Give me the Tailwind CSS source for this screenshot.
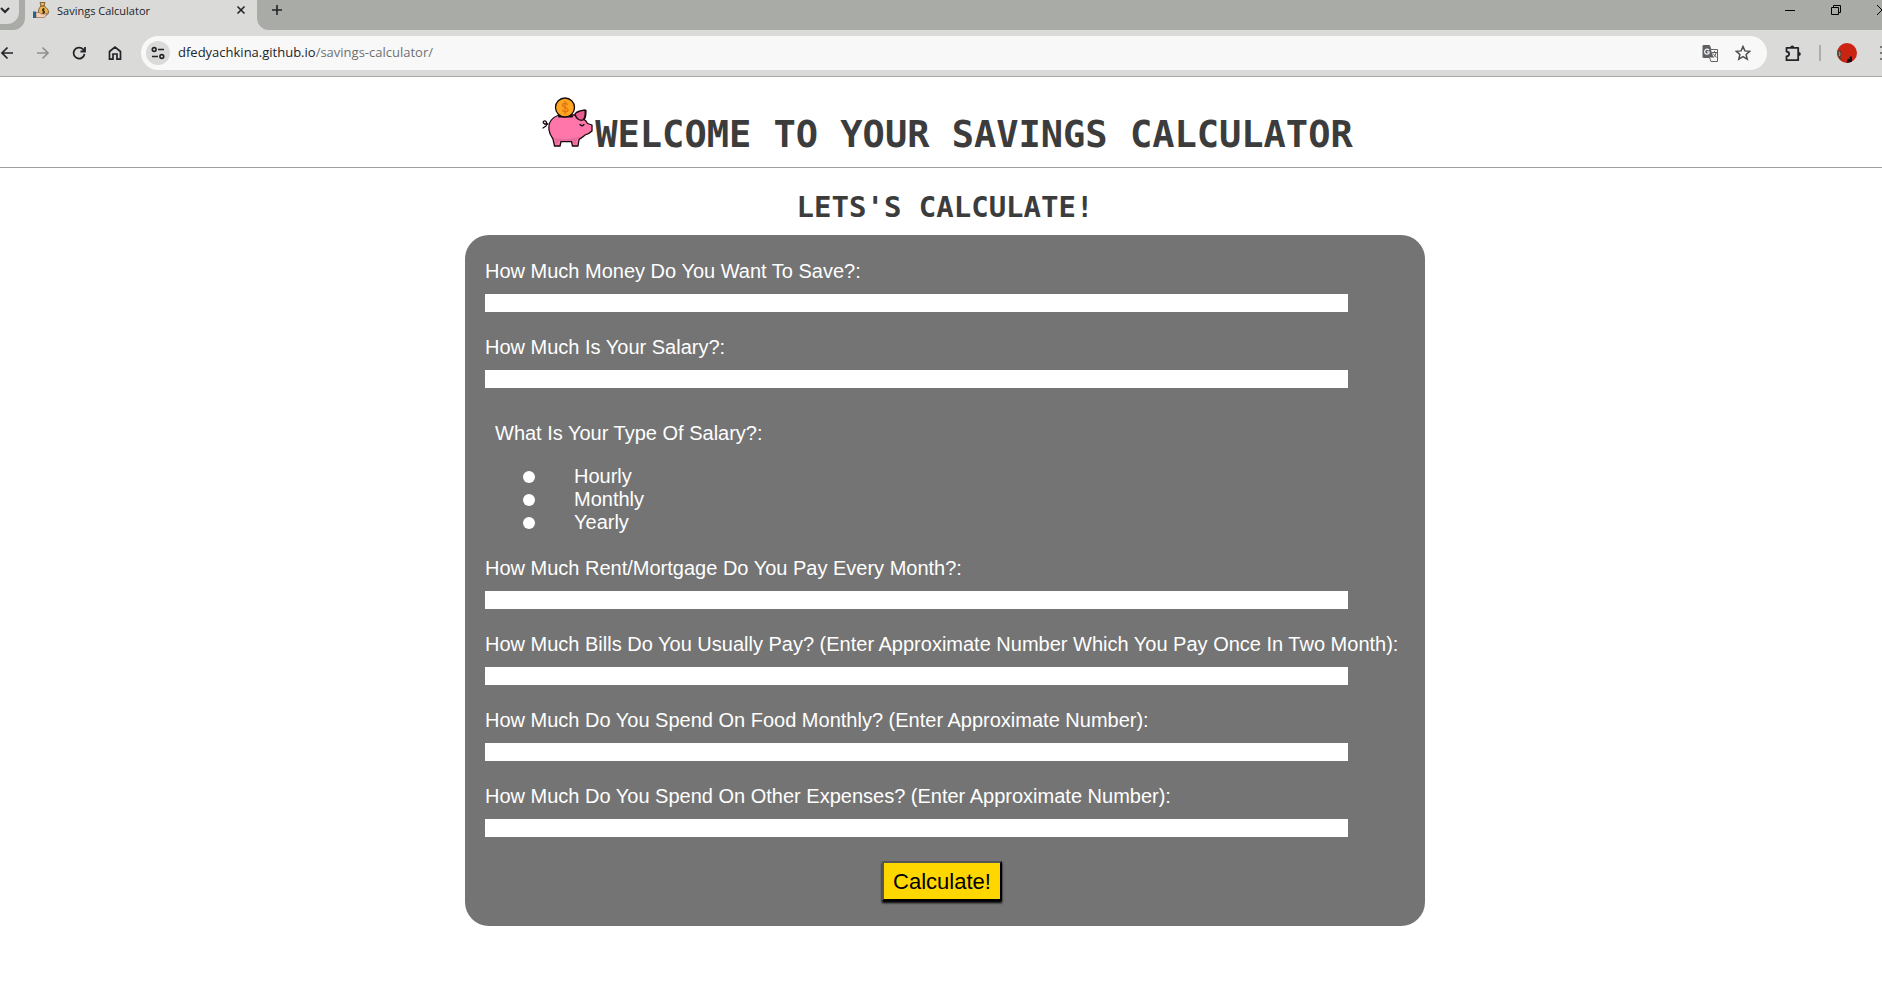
<!DOCTYPE html>
<html lang="en">
<head>
<meta charset="utf-8">
<title>Savings Calculator</title>
<script src="https://cdn.jsdelivr.net/npm/@tailwindcss/browser@4"></script>
</head>
<body class="min-h-screen overflow-x-hidden bg-white font-['Liberation_Sans',sans-serif]">
<header class="border-b border-[#a9aaa8] bg-[#dadad8] font-['Open_Sans',sans-serif] text-[#222428]">
  <!-- Tab strip -->
  <div class="flex h-[30px] bg-[#dadad8]">
    <div class="flex w-[25px] shrink-0 items-start rounded-br-xl bg-[#a9aba6]">
      <button aria-label="Search tabs" class="h-6 w-[19px] rounded-br-xl bg-[#dadad8]">
        <svg class="h-6 w-[10px]" viewBox="0 0 10 24" fill="none" stroke="currentColor" stroke-width="2"><path d="M1 8l4 4 4-4"/></svg>
      </button>
    </div>
    <div class="flex w-[232px] shrink-0 items-start bg-[#dadad8] pl-2">
      <svg class="mt-[2px] size-4" viewBox="0 0 16 16"><path d="M7 .5h5l-1 3.500c3 2 4.500 4 4.500 6 0 2.500-2 3.500-5 3.500s-5-1-5-3.500S6 6 8 4z" fill="#eeb54c" stroke="#6b4a28" stroke-width=".8"/><path d="M7.500 4h4" stroke="#6b4a28"/><path d="M11.800 7H9.500v2h2v2H9M10.500 6v6" fill="none" stroke="#3d2c22" stroke-width=".9"/><path d="M3 10.500h3l2.500 1.500h3l3-1-3 4.500H3z" fill="#f6cdb0" stroke="#7a5a4c" stroke-width=".6"/><path d="M0 9.500h3V16H0z" fill="#276396"/></svg>
      <span class="ml-2 text-[11px] leading-[22px]">Savings Calculator</span>
      <button aria-label="Close tab" class="mt-[5px] mr-[11px] ml-auto"><svg class="size-[10px]" viewBox="0 0 10 10" stroke="currentColor" stroke-width="1.600"><path d="M1.500 1.500l7 7M8.500 1.500l-7 7"/></svg></button>
    </div>
    <div class="flex flex-1 items-start rounded-bl-xl bg-[#a9aba6] pl-[14px]">
      <button aria-label="New tab" class="mt-1"><svg class="size-3" viewBox="0 0 12 12" stroke="currentColor" stroke-width="1.600"><path d="M6 1v10M1 6h10"/></svg></button>
      <div class="ml-auto flex items-center text-black">
        <button aria-label="Minimize" class="mt-1 mr-9"><svg class="h-3 w-[10px]" viewBox="0 0 10 12" stroke="currentColor"><path d="M0 6.500h10"/></svg></button>
        <button aria-label="Restore" class="mt-1 mr-9"><svg class="h-3 w-[10px]" viewBox="0 0 10 12" fill="none" stroke="currentColor"><path d="M.5 3.500h7v7h-7zM2.500 3.500v-2h7v7h-2"/></svg></button>
        <button aria-label="Close window" class="mt-1"><svg class="h-3 w-[5px]" viewBox="0 0 5 12" stroke="currentColor"><path d="M0 1l10 10M0 11L10 1" fill="none"/></svg></button>
      </div>
    </div>
  </div>
  <!-- Toolbar -->
  <div class="flex h-[46px] items-center">
    <button aria-label="Back"><svg class="h-4 w-[14px]" viewBox="0 0 14 16" fill="none" stroke="currentColor" stroke-width="1.700"><path d="M13 8H2M7.500 2.500L2 8l5.500 5.500"/></svg></button>
    <button aria-label="Forward" class="ml-[22px] text-[#8f918f]"><svg class="h-4 w-[14px]" viewBox="0 0 14 16" fill="none" stroke="currentColor" stroke-width="1.700"><path d="M1 8h11M6.500 2.500L12 8l-5.500 5.500"/></svg></button>
    <button aria-label="Reload" class="ml-[22px]"><svg class="h-4 w-[14px]" viewBox="0 0 14 16" fill="none" stroke="currentColor" stroke-width="1.800"><path d="M12.500 9A5.500 5.500 0 1 1 11 4.200L12.500 6M13 2v4.500H8.500"/></svg></button>
    <button aria-label="Home" class="ml-[22px]"><svg class="h-4 w-[14px]" viewBox="0 0 14 16" fill="none" stroke="currentColor" stroke-width="1.700"><path d="M1.500 6.500L7 2l5.500 4.500v7.700H9V9H5v5.200H1.500z"/></svg></button>
    <div class="ml-[19px] flex h-[34px] flex-1 items-center rounded-full bg-[#f8f8f8] pr-4 pl-[5px]">
      <button aria-label="Site information" class="flex size-6 items-center justify-center rounded-full bg-[#dadad8]"><svg class="size-[14px]" viewBox="0 0 14 14" fill="none" stroke="currentColor" stroke-width="1.600"><circle cx="3.200" cy="3.500" r="1.900"/><path d="M7 3.500h6M1 10.500h6"/><circle cx="10.800" cy="10.500" r="1.900"/></svg></button>
      <a href="#" class="ml-2 text-[13px] text-[#6e7070]"><span class="text-[#222428]">dfedyachkina.github.io</span>/savings-calculator/</a>
      <button aria-label="Translate this page" class="ml-auto text-[#5f6164]"><svg class="size-[17px]" viewBox="0 0 17 17"><path d="M1.500.5h6l1.500 4h6.500v12H9l-1.500-4h-6z" fill="none" stroke="currentColor"/><path d="M.5 .5h7l4 12h-11z" fill="currentColor"/><path d="M7 5A2.500 2.500 0 1 0 7 8.300V6.800H5" fill="none" stroke="#f8f8f8" stroke-width="1.200"/><path d="M10 7.500h5M12.500 6v1.500M14 7.500c0 2-1.500 4-3 5M11 8.500l3.500 4" fill="none" stroke="currentColor"/></svg></button>
      <button aria-label="Bookmark this page" class="ml-4 text-[#4b4d50]"><svg class="size-4" viewBox="0 0 16 16" fill="none" stroke="currentColor" stroke-width="1.500"><path d="M8 1.500l1.900 4.400 4.800.4-3.600 3.200 1.100 4.700L8 11.700l-4.200 2.500 1.100-4.700L1.300 6.300l4.800-.4z"/></svg></button>
    </div>
    <button aria-label="Extensions" class="ml-[18px]"><svg class="size-[17px]" viewBox="0 0 17 17"><path d="M1.500 2.800h11.700v12.400H1.500v-3.700c3.500-.5 3.500-4.500 0-5z" fill="none" stroke="currentColor" stroke-width="1.800" stroke-linejoin="round"/><path d="M5.200 2.500a2 2 0 0 1 4 0zM13.800 7a2 2 0 0 1 0 4z" fill="currentColor"/></svg></button>
    <span class="ml-[17px] h-4 w-[2px] bg-[#acaeab]"></span>
    <button aria-label="Profile" class="ml-4"><svg class="size-5" viewBox="0 0 20 20"><circle cx="10" cy="10" r="10" fill="#cb2413"/><path d="M.5 7q4 0 4 3t-1 4l1.500 4Q-1 14 .5 7z" fill="#5d4136"/><path d="M1.500 9l1.500 1-.5 3" fill="none" stroke="#b5a394"/><path d="M9.500 19.500l1.500-4 1.500 1 .5-3.500 2 1v4.500q-2.500 1.500-5.500 1z" fill="#151010"/></svg></button>
    <button aria-label="Menu" class="ml-[23px]"><svg class="h-4 w-[2px]" viewBox="0 0 2 16" fill="#77797a"><path d="M0 1h2v2H0zM0 7h2v2H0zM0 13h2v2H0z"/></svg></button>
  </div>
</header>

<div class="border-b border-[#a0a0a0] pt-5 pb-[10px] pl-3">
  <h1 class="flex items-baseline justify-center gap-[2px] font-['DejaVu_Sans_Mono',monospace] text-[37px] leading-[44px] font-bold text-[#3c3c3c]">
    <svg class="h-[50px] w-[52px] shrink-0" viewBox="0 0 52 50" stroke="#16090e" stroke-width="1.300" stroke-linejoin="round" stroke-linecap="round">
      <path d="M7 27C3 28 1 25 3 24s4 3 2 5l-3 2" fill="none"/>
      <path d="M8 33C7 25 12 20 18 18l16 0 2 2c1-4 5-6 9-6.500 0 5-.5 8-2 9 2 1 3 3 3.500 4l4.500 1.500v6c-2 2-4 3-7 4-2 2-4 3-6 4.500l-1 6.500h-5.500l-1-4.500H20l-1 4.500h-5.500L12 42c-2-3-3.500-5-4-9z" fill="#ff77aa"/>
      <path d="M11 39c4 4 20 4 29 0l-4 3-2 6-3-4H18l-3 4-1-6z" fill="#e66b9c" stroke="none"/>
      <path d="M34 17c2-3 6-3.500 10-4 .5 4 0 8-2 10-3 1-7-1-8-6z" fill="#ea5c91"/>
      <path d="M18 19.500h13" stroke-width="2"/>
      <circle cx="24" cy="10.500" r="9.500" fill="#ffa51f"/>
      <path d="M26.500 7.500c-1-2-5-1.500-5 .7 0 3 5.500 1.600 5.500 4.600 0 2.400-4.500 2.800-5.500.4M24 4.500v12" fill="none" stroke="#df7412"/>
      <path d="M39 27.500q2 2.500 4 0" fill="none"/>
    </svg>
    WELCOME TO YOUR SAVINGS CALCULATOR
  </h1>
</div>

<main class="pt-[22px] pb-12 pl-2">
  <h2 class="mb-[11px] text-center font-['DejaVu_Sans_Mono',monospace] text-[29px] leading-[34px] font-bold text-[#3c3c3c]">LETS'S CALCULATE!</h2>
  <form class="mx-auto max-w-[960px] rounded-3xl bg-[#747474] px-5 py-[25px] text-xl leading-[23px] text-white">
    <div class="flex flex-col gap-6">
      <div class="flex flex-col gap-[11px]">
        <label for="goal">How Much Money Do You Want To Save?:</label>
        <input id="goal" type="text" class="h-[18px] w-full max-w-[863px] bg-white text-sm text-black">
      </div>
      <div class="flex flex-col gap-[11px]">
        <label for="salary">How Much Is Your Salary?:</label>
        <input id="salary" type="text" class="h-[18px] w-full max-w-[863px] bg-white text-sm text-black">
      </div>
    </div>
    <fieldset class="mt-[34px] mb-[23px] pl-[10px]">
      <legend class="mb-5">What Is Your Type Of Salary?:</legend>
      <div class="flex items-center pl-7"><input id="hourly" name="type" type="radio" class="mr-[39px] size-3 appearance-none rounded-full bg-white"><label for="hourly">Hourly</label></div>
      <div class="flex items-center pl-7"><input id="monthly" name="type" type="radio" class="mr-[39px] size-3 appearance-none rounded-full bg-white"><label for="monthly">Monthly</label></div>
      <div class="flex items-center pl-7"><input id="yearly" name="type" type="radio" class="mr-[39px] size-3 appearance-none rounded-full bg-white"><label for="yearly">Yearly</label></div>
    </fieldset>
    <div class="flex flex-col gap-6">
      <div class="flex flex-col gap-[11px]">
        <label for="rent">How Much Rent/Mortgage Do You Pay Every Month?:</label>
        <input id="rent" type="text" class="h-[18px] w-full max-w-[863px] bg-white text-sm text-black">
      </div>
      <div class="flex flex-col gap-[11px]">
        <label for="bills">How Much Bills Do You Usually Pay? (Enter Approximate Number Which You Pay Once In Two Month):</label>
        <input id="bills" type="text" class="h-[18px] w-full max-w-[863px] bg-white text-sm text-black">
      </div>
      <div class="flex flex-col gap-[11px]">
        <label for="food">How Much Do You Spend On Food Monthly? (Enter Approximate Number):</label>
        <input id="food" type="text" class="h-[18px] w-full max-w-[863px] bg-white text-sm text-black">
      </div>
      <div class="flex flex-col gap-[11px]">
        <label for="other">How Much Do You Spend On Other Expenses? (Enter Approximate Number):</label>
        <input id="other" type="text" class="h-[18px] w-full max-w-[863px] bg-white text-sm text-black">
      </div>
      <div class="flex justify-center pr-[6px]">
        <button type="submit" class="h-10 w-[120px] border-2 border-t-[#555555] border-r-black border-b-black border-l-[#555555] bg-[#ffd700] text-[22px] text-black shadow-[0_2px_2px_#000000]">Calculate!</button>
      </div>
    </div>
  </form>
</main>
</body>
</html>
